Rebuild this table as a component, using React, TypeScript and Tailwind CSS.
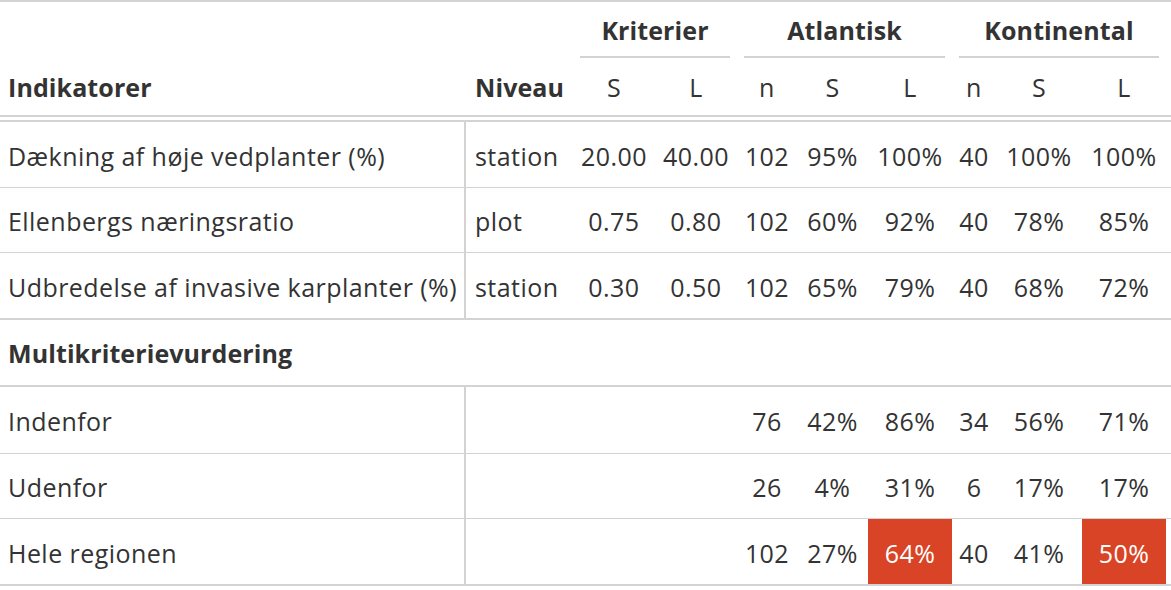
const cols = "grid grid-cols-[466px_107px_82px_82px_60px_71px_84px_44px_86px_84px_1fr]";

type Row = {
  label: string;
  niveau?: string;
  vals: string[];
  h: string;
  border: string;
  hot?: number[];
};

const indicators: Row[] = [
  {
    label: "Dækning af høje vedplanter (%)",
    niveau: "station",
    vals: ["20.00", "40.00", "102", "95%", "100%", "40", "100%", "100%"],
    h: "h-[65px]",
    border: "border-b border-[#d3d3d3]",
  },
  {
    label: "Ellenbergs næringsratio",
    niveau: "plot",
    vals: ["0.75", "0.80", "102", "60%", "92%", "40", "78%", "85%"],
    h: "h-[64px]",
    border: "border-b border-[#d3d3d3]",
  },
  {
    label: "Udbredelse af invasive karplanter (%)",
    niveau: "station",
    vals: ["0.30", "0.50", "102", "65%", "79%", "40", "68%", "72%"],
    h: "h-[65px]",
    border: "border-b-2 border-[#d3d3d3]",
  },
];

const summary: Row[] = [
  {
    label: "Indenfor",
    vals: ["", "", "76", "42%", "86%", "34", "56%", "71%"],
    h: "h-[66px]",
    border: "border-b border-[#d3d3d3]",
  },
  {
    label: "Udenfor",
    vals: ["", "", "26", "4%", "31%", "6", "17%", "17%"],
    h: "h-[64px]",
    border: "border-b border-[#d3d3d3]",
  },
  {
    label: "Hele regionen",
    vals: ["", "", "102", "27%", "64%", "40", "41%", "50%"],
    h: "h-[65px]",
    border: "border-b-2 border-[#d3d3d3]",
    hot: [4, 7],
  },
];

function BodyRow({ row }: { row: Row }) {
  return (
    <div className={`${cols} ${row.border}`}>
      <div className={`${row.h} flex items-center pl-2 pt-[4px] border-r-2 border-[#d3d3d3] whitespace-nowrap`}>
        {row.label}
      </div>
      <div className="flex items-center pl-[9px] pt-[4px]">{row.niveau ?? ""}</div>
      {row.vals.map((v, i) => (
        <div
          key={i}
          className={`flex items-center justify-center pt-[4px] ${
            row.hot?.includes(i) ? "bg-[#da4426] text-white" : ""
          }`}
        >
          {v}
        </div>
      ))}
      <div />
    </div>
  );
}

export default function App() {
  return (
    <div className="w-[1171px] h-[590px] overflow-hidden bg-white text-[#333333] text-[25px] tracking-[0.45px] font-['Open_Sans',sans-serif]">
      <div className="border-t-2 border-[#d3d3d3]">
        {/* spanners */}
        <div className={`${cols} h-[56px] font-bold tracking-[0.1px]`}>
          <div className="col-span-2" />
          <div className="col-span-2 mx-[7px] pt-[3px] border-b-2 border-[#d3d3d3] flex items-center justify-center">
            Kriterier
          </div>
          <div className="col-span-3 mx-[7px] pt-[3px] border-b-2 border-[#d3d3d3] flex items-center justify-center">
            Atlantisk
          </div>
          <div className="col-span-3 mx-[7px] pt-[3px] border-b-2 border-[#d3d3d3] flex items-center justify-center">
            Kontinental
          </div>
          <div />
        </div>

        {/* column labels */}
        <div className={`${cols} h-[59px] border-b-2 border-[#d3d3d3]`}>
          <div className="flex items-center pl-2 pt-[3px] font-bold tracking-[0.1px]">Indikatorer</div>
          <div className="flex items-center pl-[9px] pt-[3px] font-bold tracking-[0.1px]">Niveau</div>
          {["S", "L", "n", "S", "L", "n", "S", "L"].map((c, i) => (
            <div key={i} className="flex items-center justify-center pt-[3px]">
              {c}
            </div>
          ))}
          <div />
        </div>
        <div className="h-[3px]" />

        <div className="border-t-2 border-[#d3d3d3]">
          {indicators.map((r) => (
            <BodyRow key={r.label} row={r} />
          ))}

          <div className="h-[67px] border-b-2 border-[#d3d3d3] flex items-center pl-2 pt-[3px] font-bold tracking-[0.1px]">
            Multikriterievurdering
          </div>

          {summary.map((r) => (
            <BodyRow key={r.label} row={r} />
          ))}
        </div>
      </div>
    </div>
  );
}
